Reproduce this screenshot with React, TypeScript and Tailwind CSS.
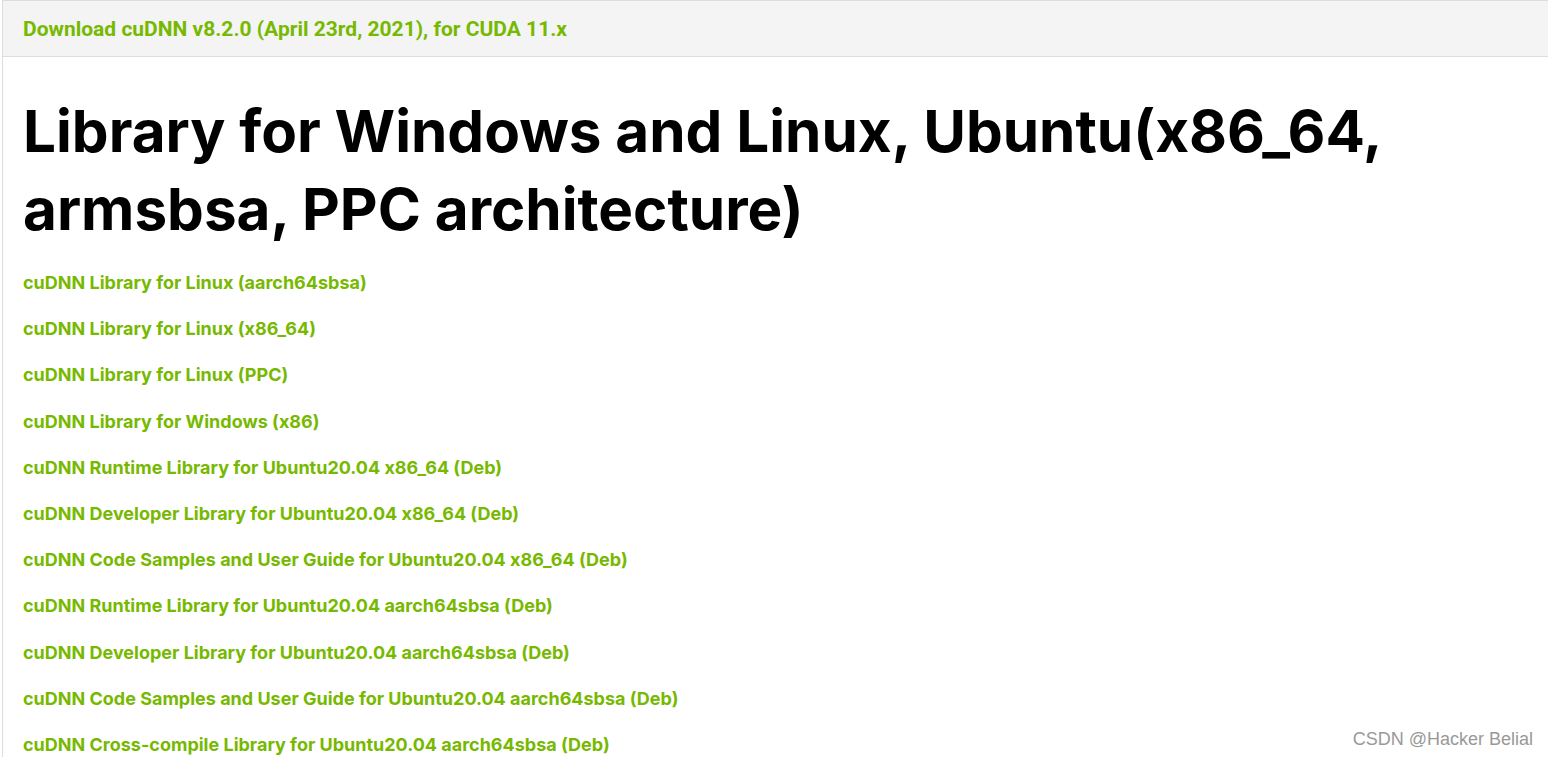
import React from "react";

const links = [
  "cuDNN Library for Linux (aarch64sbsa)",
  "cuDNN Library for Linux (x86_64)",
  "cuDNN Library for Linux (PPC)",
  "cuDNN Library for Windows (x86)",
  "cuDNN Runtime Library for Ubuntu20.04 x86_64 (Deb)",
  "cuDNN Developer Library for Ubuntu20.04 x86_64 (Deb)",
  "cuDNN Code Samples and User Guide for Ubuntu20.04 x86_64 (Deb)",
  "cuDNN Runtime Library for Ubuntu20.04 aarch64sbsa (Deb)",
  "cuDNN Developer Library for Ubuntu20.04 aarch64sbsa (Deb)",
  "cuDNN Code Samples and User Guide for Ubuntu20.04 aarch64sbsa (Deb)",
  "cuDNN Cross-compile Library for Ubuntu20.04 aarch64sbsa (Deb)",
];

const App = () => {
  return (
    <div className="relative w-full h-[757px] overflow-hidden bg-white">
      <div className="ml-[2px] h-full border-l border-[#dddddd]">
        {/* Header bar */}
        <div className="h-[57px] bg-[#f4f4f4] border-t border-b border-[#dddddd] flex items-center pl-[20px] pt-[3px]">
          <span className="text-[21px] font-bold text-[#76b900] font-['Roboto',sans-serif]">
            Download cuDNN v8.2.0 (April 23rd, 2021), for CUDA 11.x
          </span>
        </div>

        {/* Content */}
        <div className="pl-[20px] font-['Inter',sans-serif] [font-feature-settings:'calt'_0]">
          <h1 className="mt-[35px] text-[58.4px] leading-[78px] font-bold text-black">
            Library for Windows and Linux, Ubuntu(x86_64,
            <br />
            armsbsa, PPC architecture)
          </h1>
          <div className="mt-[23px] flex flex-col gap-[22.2px]">
            {links.map((text, i) => (
              <a
                key={i}
                href="#"
                className="text-[18px] leading-[24px] font-bold text-[#76b900]"
              >
                {text}
              </a>
            ))}
          </div>
        </div>
      </div>

      {/* Watermark */}
      <div className="absolute right-[15px] bottom-[4px] text-[18px] text-[#999999] font-['Liberation_Sans',sans-serif]">
        CSDN @Hacker Belial
      </div>
    </div>
  );
};

export default App;
